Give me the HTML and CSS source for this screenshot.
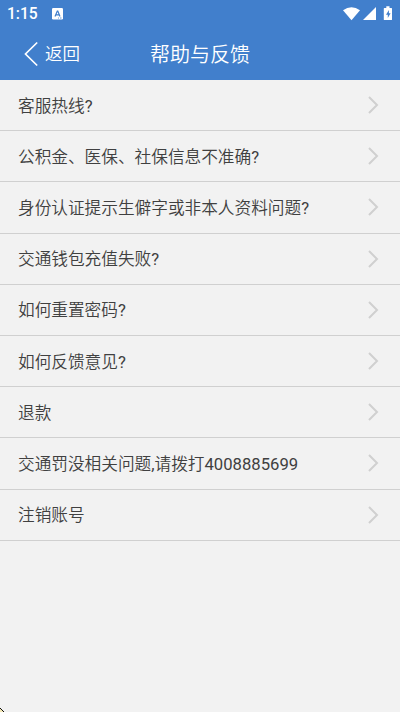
FILE: index.html
```
<!DOCTYPE html>
<html lang="zh-CN">
<head>
<meta charset="utf-8">
<title>帮助与反馈</title>
<link rel="stylesheet" href="styles.css">
</head>
<body>
<header class="header">
  <div class="status">
    <span class="time">1:15</span>
    <svg class="app-icon" width="11" height="12" viewBox="0 0 11 12"><rect width="11" height="11.4" rx="1.2" fill="#fff"/><path d="M3 8.5 5.3 3h.5L8 8.5M3.8 6.8h3.4" fill="none" stroke="#417fcc" stroke-width="1.2"/><path d="M6 10h1M8 10h1.5" stroke="#417fcc" stroke-width=".8"/></svg>
    <svg class="signals" width="52" height="16" viewBox="0 0 52 16" fill="#fff"><path d="M0 4.200Q8.500-1.800 17 4.200L8.500 14.300Z"/><path d="M33 1v13H20Z"/><path d="M41.400 2h1.900V.2h3.200V2h1.900q.6 0 .6.600v10.800q0 .6-.6.6h-7q-.6 0-.6-.6V2.600q0-.6.6-.6Z"/><path d="M45.900 4 43 8.800h1.800V12l2.800-4.800h-1.700Z" fill="#417fcc"/></svg>
  </div>
  <nav class="nav">
    <a class="back"><svg width="15" height="26" viewBox="0 0 15 26"><path d="M13.200 1.500 1.500 13l11.700 11.500" fill="none" stroke="#fff" stroke-width="1.700"/></svg><span>返回</span></a>
    <h1 class="title">帮助与反馈</h1>
  </nav>
</header>
<main class="list">
  <a class="row"><span>客服热线<b>?</b></span><svg class="chevron" viewBox="0 0 10 18"><path d="m1 1 8 8-8 8"/></svg></a>
  <a class="row"><span>公积金、医保、社保信息不准确<b>?</b></span><svg class="chevron" viewBox="0 0 10 18"><path d="m1 1 8 8-8 8"/></svg></a>
  <a class="row"><span>身份认证提示生僻字或非本人资料问题<b>?</b></span><svg class="chevron" viewBox="0 0 10 18"><path d="m1 1 8 8-8 8"/></svg></a>
  <a class="row"><span>交通钱包充值失败<b>?</b></span><svg class="chevron" viewBox="0 0 10 18"><path d="m1 1 8 8-8 8"/></svg></a>
  <a class="row"><span>如何重置密码<b>?</b></span><svg class="chevron" viewBox="0 0 10 18"><path d="m1 1 8 8-8 8"/></svg></a>
  <a class="row"><span>如何反馈意见<b>?</b></span><svg class="chevron" viewBox="0 0 10 18"><path d="m1 1 8 8-8 8"/></svg></a>
  <a class="row"><span>退款</span><svg class="chevron" viewBox="0 0 10 18"><path d="m1 1 8 8-8 8"/></svg></a>
  <a class="row"><span>交通罚没相关问题<b>,</b>请拨打<b>4008885699</b></span><svg class="chevron" viewBox="0 0 10 18"><path d="m1 1 8 8-8 8"/></svg></a>
  <a class="row"><span>注销账号</span><svg class="chevron" viewBox="0 0 10 18"><path d="m1 1 8 8-8 8"/></svg></a>
</main>
<svg class="corner" width="4" height="4" viewBox="0 0 4 4"><path d="M0 1h1v1h1v1h1v1H0Z" fill="#f5e9b5"/><path d="M0 0h1v1H0ZM1 1h1v1H1ZM2 2h1v1H2ZM3 3h1v1H3Z" fill="#111"/></svg>
</body>
</html>
```
FILE: styles.css
```
* { box-sizing: border-box; }
body {
  margin: 0;
  min-height: 712px;
  background: #f2f2f2;
  color: #404040;
  font-family: Roboto, "Noto Sans CJK SC DemiLight", "Noto Sans CJK SC", sans-serif;
}
.header { height: 80px; background: #417fcc; color: #fff; }
.status { display: flex; align-items: center; height: 27px; padding: 0 5px 0 7px; }
.time { width: 45px; padding-top: 1px; font-size: 15.6px; font-weight: 500; line-height: 27px; }
.signals { margin-left: auto; }
.nav { display: grid; grid-template-columns: 1fr auto 1fr; align-items: center; height: 53px; }
.back { display: flex; align-items: center; gap: 6px; padding-left: 24px; font-size: 17.5px; font-weight: 350; line-height: 26px; }
.title { margin: 0; padding-top: 2px; font-size: 20px; font-weight: 350; line-height: 30px; }
.row {
  display: flex;
  align-items: center;
  justify-content: space-between;
  height: 51.2px;
  padding: 0 22px 0 18px;
  border-bottom: 1px solid #d0d0d0;
  font-size: 16.67px;
  font-weight: 350;
  line-height: 24px;
}
.row span { padding-top: 3px; }
.row b { font-weight: 400; }
.chevron { width: 10px; height: 18px; fill: none; stroke: #d0d0d0; stroke-width: 2; overflow: visible; }
.corner { position: absolute; left: 0; bottom: 0; }
```
